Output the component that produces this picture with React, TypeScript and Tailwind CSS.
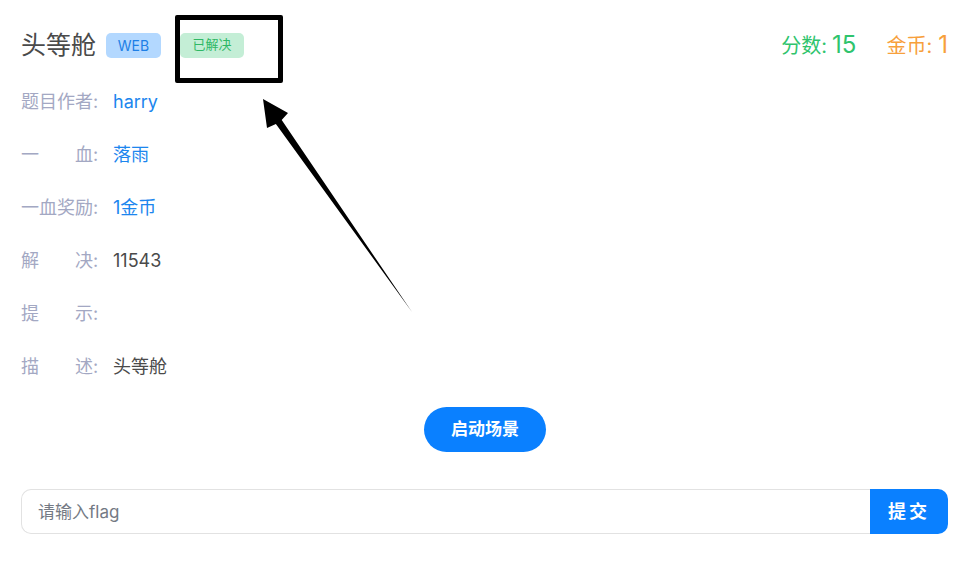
import React from "react";

const rows: { label: string; value: string; blue?: boolean }[] = [
  { label: "题目作者", value: "harry", blue: true },
  { label: "一血", value: "落雨", blue: true },
  { label: "一血奖励", value: "1金币", blue: true },
  { label: "解决", value: "11543" },
  { label: "提示", value: "" },
  { label: "描述", value: "头等舱" },
];

const Arrow = () => (
  <svg className="absolute left-0 top-0 pointer-events-none" width="967" height="563">
    <polygon
      points="263,99 288,113 281.7,120.1 412,312 275.9,124.1 267,128"
      fill="#000"
    />
  </svg>
);

const App = () => {
  return (
    <div
      className="relative w-[967px] h-[563px] bg-white overflow-hidden"
      style={{ fontFamily: '"Inter", "Noto Sans CJK SC", sans-serif' }}
    >
      <div className="flex flex-col px-[21px] pt-[30px]">
        {/* header */}
        <div className="flex items-center justify-between h-[30px]">
          <div className="flex items-center">
            <span className="text-[25px] leading-none text-[#4a4a4a]">头等舱</span>
            <span className="ml-[10px] h-[25px] w-[55px] flex items-center justify-center rounded-[5px] bg-[#b3d8ff] text-[14px] text-[#1e7fe6]">
              WEB
            </span>
            <span className="ml-[19px] h-[25px] w-[64px] flex items-center justify-center rounded-[5px] bg-[#c4eed6] text-[13px] text-[#2fb865]">
              已解决
            </span>
          </div>
          <div className="flex items-baseline mr-[-2px]">
            <span className="text-[20px] text-[#2fc46d]">分数:</span>
            <span className="ml-[5px] text-[24px] text-[#2fc46d]">15</span>
            <span className="ml-[30px] text-[20px] text-[#f7a03c]">金币:</span>
            <span className="ml-[6px] text-[24px] text-[#f7a03c]">1</span>
          </div>
        </div>

        {/* info rows */}
        <div className="flex flex-col mt-[15px]">
          {rows.map((r) => (
            <div key={r.label} className="flex items-center h-[53px] text-[18px]">
              <span
                className="w-[72px] text-[#a3a8c3]"
                style={{ textAlignLast: "justify" }}
              >
                {r.label}
              </span>
              <span className="text-[#a3a8c3] w-[20px]">:</span>
              <span className={r.blue ? "text-[#1c86ee]" : "text-[#4a4a4a]"}>{r.value}</span>
            </div>
          ))}
        </div>

        {/* start button */}
        <div className="flex justify-center mt-[14px] ml-[3px]">
          <button className="w-[122px] h-[45px] rounded-full bg-[#0a80ff] text-white text-[17px] font-bold">
            启动场景
          </button>
        </div>

        {/* flag input */}
        <div className="flex mt-[37px] mr-[-2px] h-[45px]">
          <input
            className="flex-1 h-full border border-[#e2e2e2] border-r-0 rounded-l-[10px] pl-[16px] text-[17px] outline-none placeholder:text-[#747a84]"
            placeholder="请输入flag"
          />
          <button className="w-[78px] h-full rounded-r-[10px] bg-[#0a80ff] text-white text-[18px] font-bold tracking-[3px]">
            提交
          </button>
        </div>
      </div>

      {/* annotation overlay */}
      <div className="absolute left-[175px] top-[15px] w-[108px] h-[68px] border-[5px] border-black rounded-[2px]" />
      <Arrow />
    </div>
  );
};

export default App;
